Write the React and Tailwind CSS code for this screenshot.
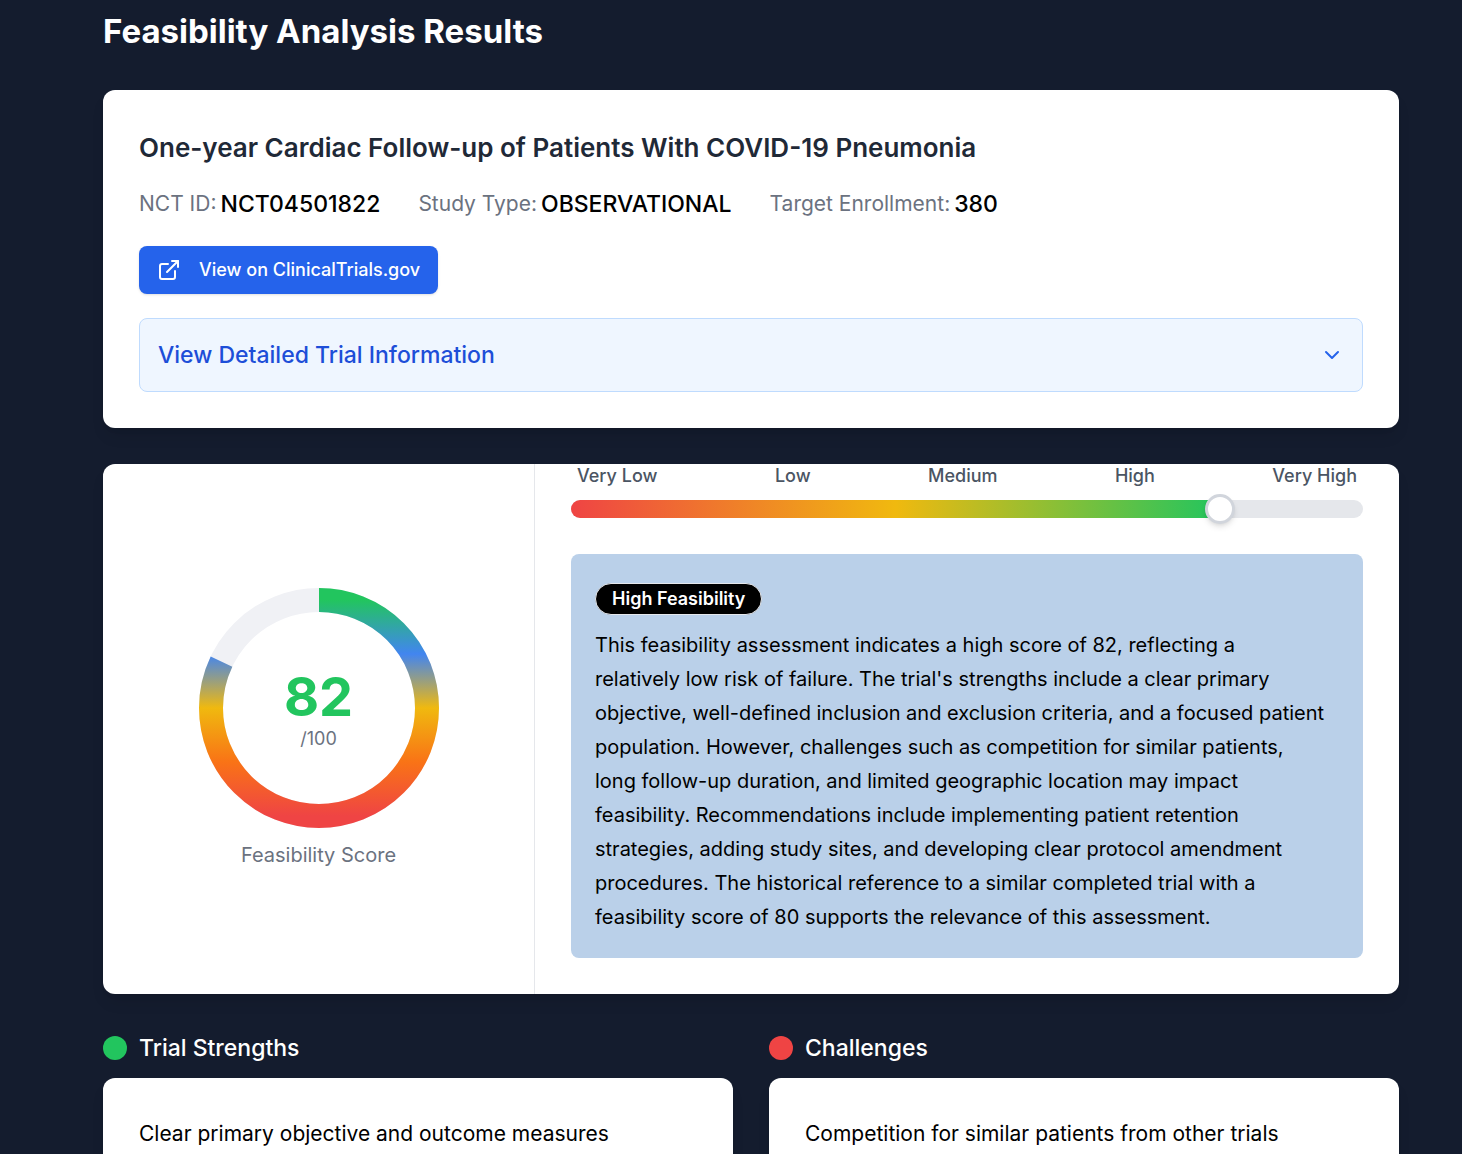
import React, { useState } from 'react';
import { ChevronDown, ExternalLink } from 'lucide-react';

const LEVELS = ['Very Low', 'Low', 'Medium', 'High', 'Very High'];

const SUMMARY = [
  'This feasibility assessment indicates a high score of 82, reflecting a',
  "relatively low risk of failure. The trial's strengths include a clear primary",
  'objective, well-defined inclusion and exclusion criteria, and a focused patient',
  'population. However, challenges such as competition for similar patients,',
  'long follow-up duration, and limited geographic location may impact',
  'feasibility. Recommendations include implementing patient retention',
  'strategies, adding study sites, and developing clear protocol amendment',
  'procedures. The historical reference to a similar completed trial with a',
  'feasibility score of 80 supports the relevance of this assessment.',
].join('\n');

function Meta({ label, value }) {
  return (
    <div className="flex h-9 items-center gap-1">
      <dt className="text-[21px] text-[#6b7280]">{label}:</dt>
      <dd className="text-[23px] font-medium text-black">{value}</dd>
    </div>
  );
}

function ScoreRing({ score }) {
  const length = 2 * Math.PI * 108;

  return (
    <div className="relative size-60">
      <svg viewBox="0 0 240 240" className="size-full" aria-hidden="true">
        <defs>
          <linearGradient id="ring" gradientUnits="userSpaceOnUse" x1="0" y1="12" x2="0" y2="228">
            <stop offset="0" stopColor="#22c55e" />
            <stop offset="0.25" stopColor="#4285f0" />
            <stop offset="0.5" stopColor="#f0b90f" />
            <stop offset="0.75" stopColor="#f97316" />
            <stop offset="1" stopColor="#ef4444" />
          </linearGradient>
        </defs>
        <circle cx="120" cy="120" r="108" fill="none" stroke="#f0f1f5" strokeWidth="24" />
        <path
          d="M120 12a108 108 0 0 1 0 216a108 108 0 0 1 0-216"
          fill="none"
          stroke="url(#ring)"
          strokeWidth="24"
          strokeDasharray={`${(length * score) / 100} ${length}`}
        />
      </svg>
      <div className="absolute inset-0 flex flex-col items-center justify-center pt-1.5">
        <span className="text-[54px] leading-[56px] font-bold text-[#22c55e]">{score}</span>
        <span className="text-lg text-[#6b7280]">/100</span>
      </div>
    </div>
  );
}

function ScoreScale({ score, onChange }) {
  return (
    <div>
      <div className="flex justify-between px-1.5 text-lg leading-6 font-medium text-[#4b5563]">
        {LEVELS.map((level) => (
          <span key={level}>{level}</span>
        ))}
      </div>
      <div className="relative mt-3 h-[18px] rounded-full bg-gray-200">
        <div
          className="h-full rounded-full bg-linear-to-r/srgb from-[#ef4444] via-[#f0b90f] to-[#22c55e]"
          style={{ width: `${score}%` }}
        />
        {/* Wider than the track by half a thumb on each side, so the thumb centre sits on the score */}
        <input
          type="range"
          min="0"
          max="100"
          value={score}
          onChange={(e) => onChange(Number(e.target.value))}
          aria-label="Feasibility score"
          className="absolute inset-y-0 -left-[15px] w-[calc(100%+30px)] appearance-none bg-transparent [&::-webkit-slider-thumb]:size-[30px] [&::-webkit-slider-thumb]:appearance-none [&::-webkit-slider-thumb]:rounded-full [&::-webkit-slider-thumb]:border-3 [&::-webkit-slider-thumb]:border-solid [&::-webkit-slider-thumb]:border-gray-300 [&::-webkit-slider-thumb]:bg-white [&::-webkit-slider-thumb]:shadow-md"
        />
      </div>
    </div>
  );
}

function Findings({ title, dot, items }) {
  return (
    <section>
      <h2 className="flex items-center gap-3 text-[23px] leading-9 font-medium text-white">
        <span className={`size-6 rounded-full ${dot}`} />
        {title}
      </h2>
      <ul className="mt-3 rounded-xl bg-white p-9 shadow-lg">
        {items.map((item) => (
          <li key={item} className="text-[21px] leading-10 text-black">
            {item}
          </li>
        ))}
      </ul>
    </section>
  );
}

export default function App() {
  const [score, setScore] = useState(82);

  return (
    <main className="min-h-screen bg-[#141c2e] pr-[63px] pb-9 pl-[103px] font-['Inter',sans-serif]">
      <h1 className="pt-2 text-[33px] leading-[46px] font-bold text-white">Feasibility Analysis Results</h1>

      {/* Trial header */}
      <section className="mt-9 rounded-xl bg-white p-9 shadow-lg">
        <h2 className="text-[26px] leading-[44px] font-semibold text-[#1f2937]">
          One-year Cardiac Follow-up of Patients With COVID-19 Pneumonia
        </h2>
        <dl className="mt-4 flex flex-wrap gap-x-[38px]">
          <Meta label="NCT ID" value="NCT04501822" />
          <Meta label="Study Type" value="OBSERVATIONAL" />
          <Meta label="Target Enrollment" value="380" />
        </dl>
        <a
          href="#trial"
          className="mt-6 inline-flex h-12 items-center gap-[18px] rounded-lg bg-[#2563eb] px-[18px] text-lg font-medium text-white shadow-sm"
        >
          <ExternalLink size={24} />
          View on ClinicalTrials.gov
        </a>
        <button
          type="button"
          className="mt-6 flex h-[74px] w-full items-center justify-between rounded-lg border border-[#bfdbfe] bg-[#eff6ff] px-[18px] text-[23px] font-medium text-[#1d4ed8]"
        >
          View Detailed Trial Information
          <ChevronDown size={24} className="text-[#2563eb]" />
        </button>
      </section>

      {/* Score */}
      <section className="mt-9 grid grid-cols-3 rounded-xl bg-white shadow-lg">
        <div className="flex flex-col items-center justify-center border-r border-gray-200">
          <ScoreRing score={score} />
          <p className="mt-3 text-xl leading-[30px] text-[#6b7280]">Feasibility Score</p>
        </div>
        <div className="col-span-2 px-9 pb-9">
          <ScoreScale score={score} onChange={setScore} />
          <div className="mt-9 rounded-lg bg-[#bad0e9] px-6 pt-[29px] pb-6 text-black">
            <span className="flex h-8 w-fit items-center rounded-full border border-gray-200 bg-black px-4 text-lg font-semibold text-white">
              High Feasibility
            </span>
            <p className="mt-[13px] text-xl leading-[34px] whitespace-pre-line">{SUMMARY}</p>
          </div>
        </div>
      </section>

      <div className="mt-9 grid grid-cols-2 gap-9">
        <Findings
          title="Trial Strengths"
          dot="bg-[#22c55e]"
          items={['Clear primary objective and outcome measures']}
        />
        <Findings
          title="Challenges"
          dot="bg-[#ef4444]"
          items={['Competition for similar patients from other trials']}
        />
      </div>
    </main>
  );
}
